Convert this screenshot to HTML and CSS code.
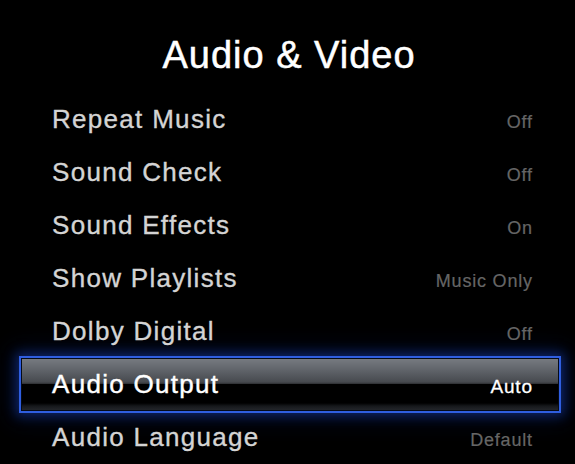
FILE: index.html
```html
<!DOCTYPE html>
<html lang="en">
<head>
<meta charset="utf-8">
<title>Audio &amp; Video</title>
<link rel="stylesheet" href="styles.css">
</head>
<body>
<main class="screen">
  <h1 class="title">Audio &amp; Video</h1>
  <ul class="menu">
    <li class="row"><span class="label">Repeat Music</span><span class="value">Off</span></li>
    <li class="row"><span class="label">Sound Check</span><span class="value">Off</span></li>
    <li class="row"><span class="label">Sound Effects</span><span class="value">On</span></li>
    <li class="row"><span class="label">Show Playlists</span><span class="value">Music Only</span></li>
    <li class="row"><span class="label">Dolby Digital</span><span class="value">Off</span></li>
    <li class="row row-selected">
      <div class="sel-panel"><span class="label">Audio Output</span><span class="value">Auto</span></div>
    </li>
    <li class="row"><span class="label">Audio Language</span><span class="value">Default</span></li>
  </ul>
</main>
</body>
</html>
```

FILE: styles.css
```css
html, body {
  margin: 0;
  padding: 0;
  background: #000;
}
body {
  width: 575px;
  height: 464px;
  overflow: hidden;
  font-family: "Liberation Sans", Arial, Helvetica, sans-serif;
}
.screen {
  padding-top: 32px;
}
.title {
  margin: 0 0 15px 0;
  height: 46px;
  line-height: 46px;
  font-size: 38px;
  font-weight: normal;
  letter-spacing: 1px;
  color: #ffffff;
  text-align: center;
  padding-left: 3px;
  -webkit-text-stroke: 0.5px #ffffff;
}
.menu {
  list-style: none;
  margin: 0;
  padding: 0;
}
.row {
  display: flex;
  justify-content: space-between;
  align-items: baseline;
  height: 53px;
  line-height: 53px;
  padding: 0 43px 0 52px;
}
.label {
  font-size: 26px;
  letter-spacing: 1.3px;
  color: #d4d4d4;
  -webkit-text-stroke: 0.35px #d4d4d4;
}
.value {
  font-size: 18px;
  letter-spacing: 0.8px;
  color: #666666;
  margin-right: -0.8px;
  -webkit-text-stroke: 0.2px #666666;
}
.row-selected {
  display: block;
  height: 57px;
  margin: -2px 14px -2px 19px;
  box-sizing: border-box;
  border: 2px solid #2f5ee0;
  padding: 1px;
  background: #050a18;
  box-shadow: 0 0 10px 3px rgba(20, 55, 160, 0.55), 0 0 22px 6px rgba(10, 30, 90, 0.45);
}
.sel-panel {
  display: flex;
  justify-content: space-between;
  align-items: baseline;
  height: 51px;
  line-height: 51px;
  padding: 0 26px 0 30px;
  background: linear-gradient(to bottom,
    #767a80 0px,
    #62666c 10px,
    #474a4f 23px,
    #2c2e31 25px,
    #000000 25px,
    #000000 44px,
    #16181b 47px,
    #23262a 51px);
}
.sel-panel .label {
  color: #ffffff;
  -webkit-text-stroke: 0.4px #ffffff;
}
.sel-panel .value {
  font-size: 19px;
  color: #ffffff;
  -webkit-text-stroke: 0.3px #ffffff;
}
```
